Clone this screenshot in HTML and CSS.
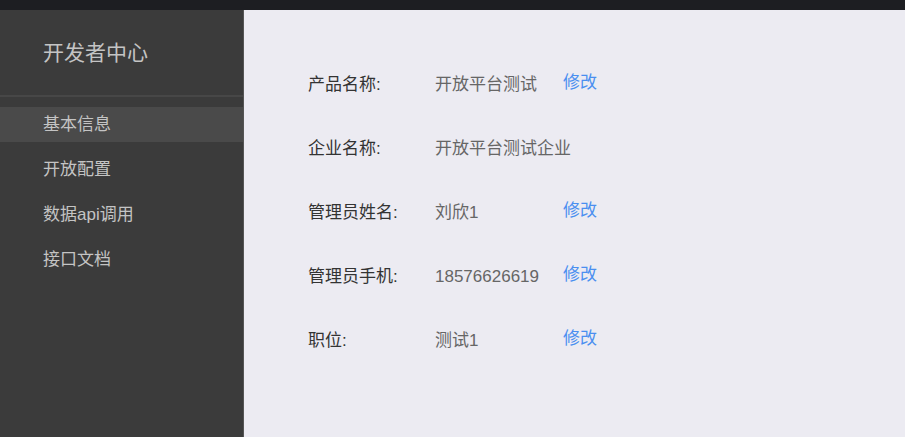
FILE: index.html
```html
<!DOCTYPE html>
<html lang="zh-CN">
<head>
  <meta charset="UTF-8" />
  <meta name="viewport" content="width=device-width, initial-scale=1.0" />
  <title>开发者中心</title>
  <link rel="stylesheet" href="styles.css">
</head>
<body>
  <div class="topbar"></div>
  <div class="layout">
    <aside class="sidebar">
      <div class="brand">开发者中心</div>
      <ul class="menu">
        <li class="active">基本信息</li>
        <li>开放配置</li>
        <li>数据api调用</li>
        <li>接口文档</li>
      </ul>
    </aside>

    <main class="content">
      <div class="info">
        <div class="label">产品名称:</div>
        <div class="value">开放平台测试</div>
        <a class="edit" href="#">修改</a>

        <div class="label">企业名称:</div>
        <div class="value">开放平台测试企业</div>
        <span></span>

        <div class="label">管理员姓名:</div>
        <div class="value">刘欣1</div>
        <a class="edit" href="#">修改</a>

        <div class="label">管理员手机:</div>
        <div class="value">18576626619</div>
        <a class="edit" href="#">修改</a>

        <div class="label">职位:</div>
        <div class="value">测试1</div>
        <a class="edit" href="#">修改</a>
      </div>
    </main>
  </div>
</body>
</html>
```

FILE: styles.css
```css
:root {
  --topbar-bg: #1d1e22;
  --sidebar-bg: #3b3b3b;
  --sidebar-active: #4a4a4a;
  --sidebar-text: #c4c4c4;
  --main-bg: #ecebf2;
  --label-color: #333;
  --value-color: #666;
  --link-color: #4a8ff0;
}

html, body {
  height: 100%;
}

body {
  margin: 0;
  background-color: var(--main-bg);
  font-family: "Liberation Sans", "Noto Sans CJK SC", sans-serif;
  display: flex;
  flex-direction: column;
}

.topbar {
  height: 10px;
  background-color: var(--topbar-bg);
  flex-shrink: 0;
}

.layout {
  flex: 1;
  display: flex;
}

.sidebar {
  width: 243px;
  background-color: var(--sidebar-bg);
  border-right: 1px solid #555;
  color: var(--sidebar-text);
}

.brand {
  height: 85px;
  line-height: 86px;
  padding-left: 43px;
  font-size: 21px;
  border-bottom: 2px solid #474747;
}

.menu {
  list-style: none;
  margin: 10px 0 0;
  padding: 0;
}

.menu li {
  height: 35px;
  line-height: 36px;
  padding-left: 43px;
  margin-bottom: 10px;
  font-size: 17px;
  cursor: pointer;
}

.menu li.active {
  background-color: var(--sidebar-active);
}

.content {
  flex: 1;
  padding: 63px 0 0 64px;
}

.info {
  display: grid;
  grid-template-columns: 127px 128px auto;
  row-gap: 40px;
  line-height: 24px;
  font-size: 17px;
  white-space: nowrap;
}

.label {
  color: var(--label-color);
}

.value {
  color: var(--value-color);
}

.edit {
  color: var(--link-color);
  text-decoration: none;
  font-size: 17px;
  margin-top: -2px;
}
```
